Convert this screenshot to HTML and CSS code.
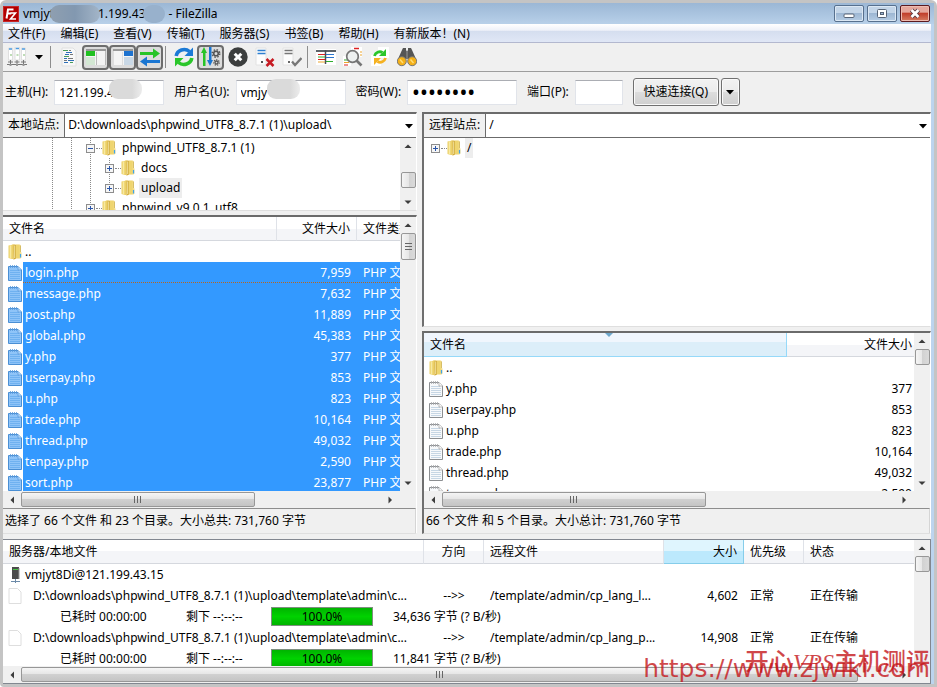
FILE: index.html
```html
<!DOCTYPE html>
<html lang="zh-CN">
<head>
<meta charset="utf-8">
<title>FileZilla</title>
<link rel="stylesheet" href="styles.css">
</head>
<body>
<svg class="sprite" aria-hidden="true">
  <symbol id="folder" viewBox="0 0 14 16">
    <path d="M4 .5h7.500l1 .5v7l1 .5v5l-1 1H6z" fill="#f3dc86"/>
    <path d="M8 .8h3.500v13.400H8z" fill="#efd56f"/>
    <path d="M.5 1.500L5.500.5v14.500L4 15 .5 14z" fill="#ecd067"/>
    <path d="M2.500 1.300v13" stroke="#f7e9a3" stroke-width="1.600"/>
    <path d="M5.500.5L8 1v13.500L5.500 15.800z" fill="#d3ac3c"/>
    <path d="M6.700 1.500v12.500" stroke="#f9efb8" stroke-width=".8"/>
    <path d="M12.500 10v3.500" stroke="#3fa4ea" stroke-width="1.200"/>
    <path d="M12.500 1.500V8" stroke="#c9a93f" stroke-width=".7"/>
  </symbol>
  <symbol id="note" viewBox="0 0 14 16">
    <path d="M.5 1.500h9.500l3.500 3.500v10.500H.5z" fill="#f7f9fb" stroke="#8c8f92"/>
    <path d="M2 5.500h9M2 7.500h10M2 9.500h10M2 11.500h10M2 13.500h10" stroke="#c6d6e4"/>
    <path d="M2.500 0v3M4.500 0v3M6.500 0v3M8.500 0v3" stroke="#a9abad" stroke-width=".8"/>
    <path d="M10 1.500v3.500h3.500" fill="#fff" stroke="#aaa" stroke-width=".8"/>
  </symbol>
  <symbol id="note-sel" viewBox="0 0 14 16">
    <path d="M.5 1.500h9.500l3.500 3.500v10.500H.5z" fill="#8fc4f8" stroke="#4a8fd4"/>
    <path d="M2 5.500h9M2 7.500h10M2 9.500h10M2 11.500h10M2 13.500h10" stroke="#6fb1f0"/>
    <path d="M2.500 0v3M4.500 0v3M6.500 0v3M8.500 0v3" stroke="#5b9bdc" stroke-width=".8"/>
    <path d="M10 1.500v3.500h3.500" fill="#b5d9fb" stroke="#5b9bdc" stroke-width=".8"/>
  </symbol>
  <symbol id="blank" viewBox="0 0 14 16"><path d="M1 .5h8.500l3.500 3.500v11.500H1z" fill="#fff" stroke="#dedede"/></symbol>
  <symbol id="plus" viewBox="0 0 9 9"><rect x=".5" y=".5" width="8" height="8" fill="#f6f6f6" stroke="#8d8d8d"/><path d="M2 4.500h5M4.500 2v5" stroke="#2a55a8"/></symbol>
  <symbol id="minus" viewBox="0 0 9 9"><rect x=".5" y=".5" width="8" height="8" fill="#f6f6f6" stroke="#8d8d8d"/><path d="M2 4.500h5" stroke="#2a55a8"/></symbol>
  <symbol id="up" viewBox="0 0 8 8"><path d="M.5 6L4 2.500 7.500 6z" fill="#3c3c3c"/></symbol>
  <symbol id="down" viewBox="0 0 8 8"><path d="M.5 2.500h7L4 6z" fill="#3c3c3c"/></symbol>
  <symbol id="left" viewBox="0 0 8 8"><path d="M6 .5v7L2.500 4z" fill="#3c3c3c"/></symbol>
  <symbol id="right" viewBox="0 0 8 8"><path d="M2.500.5v7L6 4z" fill="#3c3c3c"/></symbol>
  <symbol id="drop" viewBox="0 0 8 8"><path d="M0 2h8L4 6.500z" fill="#000"/></symbol>
</svg>

<div class="window">
  <header class="titlebar">
    <svg class="logo" viewBox="0 0 16 16" aria-hidden="true"><rect width="16" height="16" fill="#b30000"/><rect x=".5" y=".5" width="15" height="15" fill="none" stroke="#d85050" stroke-dasharray="1 1"/><path d="M3.500 12.500L5 3.500h5.500M4.300 7.500h4" fill="none" stroke="#fff" stroke-width="2"/><path d="M7.500 7h5l-5 6h5.500" fill="none" stroke="#fff" stroke-width="1.600"/></svg>
    <h1 class="title">vmjyt<span class="blot blot-wide"></span>1.199.43<span class="blot blot-small"></span>- FileZilla</h1>
    <div class="win-buttons">
      <button class="win" aria-label="最小化"><svg viewBox="0 0 28 15"><rect x="9" y="8" width="10" height="3.500" rx="1" fill="#fff" stroke="#566375"/></svg></button>
      <button class="win" aria-label="最大化"><svg viewBox="0 0 28 15"><rect x="9.500" y="3.500" width="9" height="8" rx="1" fill="#fff" stroke="#566375"/><rect x="12.500" y="6.500" width="3" height="2" fill="#9db8d6" stroke="#566375"/></svg></button>
      <button class="win close" aria-label="关闭"><svg viewBox="0 0 28 15"><path d="M10.500 4l7 7M17.500 4l-7 7" stroke="#5b3a44" stroke-width="4.500"/><path d="M10.500 4l7 7M17.500 4l-7 7" stroke="#fff" stroke-width="2.600"/></svg></button>
    </div>
  </header>

  <nav class="menubar">
    <button>文件(F)</button><button>编辑(E)</button><button>查看(V)</button><button>传输(T)</button><button>服务器(S)</button><button>书签(B)</button><button>帮助(H)</button><button>有新版本！(N)</button>
  </nav>

  <div class="toolbar" role="toolbar">
    <button class="tool" aria-label="站点管理器"><svg viewBox="0 0 20 20"><path d="M1.500 1h4v12h-4zM8 0h4.500v13H8zM14.500 1h4v12h-4z" fill="#fff" stroke="#d8d8d8" stroke-width=".8"/><path d="M2 2h3M8.700 1.500H12M15 2h3" stroke="#4c9be0" stroke-width="1.600"/><path d="M3 8h2M9.500 8h2M16 8h2" stroke="#7ebb6e" stroke-width="1"/><path d="M0 17.500h20M3.500 13v4M10 13v4M16.500 13v4M1 15h5M7.500 15h5M14 15h5" stroke="#777"/><path d="M2.500 18h2M9 18h2M15.500 18h2" stroke="#999" stroke-width="2"/></svg></button>
    <button class="tool arrow" aria-label="站点列表"><svg class="tiny"><use href="#drop"/></svg></button>
    <span class="sep"></span>
    <button class="tool" aria-label="消息日志"><svg viewBox="0 0 20 20"><path d="M3 1h11l3 3v15H3z" fill="#f8f8f8" stroke="#e0e0e0"/><path d="M4 3.500h5M5 9.500h5M11 15.500h3" stroke="#4a9c5b" stroke-width="1.200"/><path d="M7 5.500h6M5 11.500h3M6 7.500h4M9 13.500h6M5 15.500h4" stroke="#2e6fb8" stroke-width="1.200"/><path d="M11 7.500h3M9 11.500h5M5 13.500h3M10 3.500h2" stroke="#777" stroke-width="1.200"/></svg></button>
    <button class="tool on" aria-label="本地目录树"><svg viewBox="0 0 20 20"><path d="M0 2h20v16H0z" fill="#f4f4f4"/><path d="M0 2h20v2H0z" fill="#999"/><path d="M0 4h9v5H0z" fill="#1fc01f"/><path d="M0 10h9v8H0z" fill="#d3e7d3"/><path d="M10.500 5v13M19.500 4v14" stroke="#bbb"/></svg></button>
    <button class="tool on" aria-label="远程目录树"><svg viewBox="0 0 20 20"><path d="M0 2h20v16H0z" fill="#f4f4f4"/><path d="M0 2h20v2H0z" fill="#999"/><path d="M11 4h9v5h-9z" fill="#1d72cf"/><path d="M11 10h9v8h-9z" fill="#c9d8e6"/><path d="M9.500 5v13M.5 4v14" stroke="#ddd"/></svg></button>
    <button class="tool on" aria-label="传输队列"><svg viewBox="0 0 20 20"><path d="M0 5h13V1.500L20 6.500 13 11.500V8H0z" fill="#27c427"/><path d="M20 13H7V9.500L0 14.500 7 19.500V16h13z" fill="#1a76d2"/></svg></button>
    <span class="sep"></span>
    <button class="tool" aria-label="刷新"><svg viewBox="0 0 20 20"><path d="M2.200 9A8 7.500 0 0 1 15.500 4.500" fill="none" stroke="#1c7ad6" stroke-width="3.600"/><path d="M19 .5V9h-8.500z" fill="#1c7ad6"/><path d="M17.800 11A8 7.500 0 0 1 4.500 15.500" fill="none" stroke="#2ac62a" stroke-width="3.600"/><path d="M1 19.500V11h8.500z" fill="#2ac62a"/></svg></button>
    <button class="tool on" aria-label="处理队列"><svg viewBox="0 0 20 20"><path d="M2 19V6H0L3 0l3 6H4.500v13z" fill="#27c427"/><path d="M8 0h2.500v13H12l-3 6-3-6h2z" fill="#1a76d2"/><circle cx="15" cy="6.500" r="2.300" fill="none" stroke="#555" stroke-width="1.600"/><circle cx="15" cy="6.500" r="3.800" fill="none" stroke="#555" stroke-width="1.400" stroke-dasharray="1.500 1.500"/><circle cx="15.500" cy="15.500" r="1.500" fill="none" stroke="#555" stroke-width="1.300"/><circle cx="15.500" cy="15.500" r="2.700" fill="none" stroke="#555" stroke-width="1.200" stroke-dasharray="1.200 1.200"/></svg></button>
    <button class="tool" aria-label="取消"><svg viewBox="0 0 20 20"><circle cx="10" cy="10" r="9.700" fill="#3c3e3e"/><path d="M6.700 6.700l6.600 6.600M13.300 6.700l-6.600 6.600" stroke="#fff" stroke-width="3"/></svg></button>
    <button class="tool" aria-label="断开连接"><svg viewBox="0 0 20 20"><path d="M1 1h10v17H1z" fill="#fdfdfd" stroke="#e2e2e2"/><path d="M2.500 3.500h8M2.500 6.500h8" stroke="#2d7fd0" stroke-width="1.300"/><path d="M6 15h2" stroke="#555" stroke-width="2"/><path d="M11.500 12l7 7M18.500 12l-7 7" stroke="#c61a22" stroke-width="2.500"/></svg></button>
    <button class="tool" aria-label="重新连接"><svg viewBox="0 0 20 20"><path d="M1 1h10v17H1z" fill="#fdfdfd" stroke="#e2e2e2"/><path d="M2.500 3.500h8M2.500 6.500h8" stroke="#777" stroke-width="1.300"/><path d="M6 15h2" stroke="#666" stroke-width="2"/><path d="M10 14.500l3 3.500 6.500-7" fill="none" stroke="#777" stroke-width="2.300"/></svg></button>
    <span class="sep"></span>
    <button class="tool" aria-label="过滤器"><svg viewBox="0 0 20 20"><path d="M0 2h20v16H0z" fill="#fff"/><path d="M0 4h20" stroke="#5d6368" stroke-width="2"/><path d="M9.500 3v14" stroke="#4a4f54" stroke-width="1.500"/><path d="M2 7.500h7" stroke="#d22"/><path d="M10 7.500h8M10 10.500h8" stroke="#2a74cc"/><path d="M2 10h7M10 14.500h7" stroke="#2eae2e"/><path d="M2 12.500h7" stroke="#d22"/><path d="M2 15h7" stroke="#eca52c"/></svg></button>
    <button class="tool" aria-label="目录比较"><svg viewBox="0 0 20 20"><path d="M8 0h11v10H8zM0 9h8v10H0z" fill="#fff"/><path d="M11 1.500h5" stroke="#d22" stroke-width="1.500"/><path d="M17 5h2M17 8h2" stroke="#eca52c"/><path d="M1 13h4" stroke="#2eae2e"/><path d="M1 15.500h5" stroke="#eca52c"/><path d="M1 18h4" stroke="#d22"/><circle cx="9.500" cy="9.500" r="5.800" fill="#edf0f0" stroke="#757575" stroke-width="1.700"/><path d="M13.500 13.500l5 5" stroke="#757575" stroke-width="2.700"/></svg></button>
    <button class="tool" aria-label="同步浏览"><svg viewBox="0 0 20 20"><path d="M8 0h11v11H8zM1 8h10v11H1z" fill="#fff"/><path d="M4.500 9a5.500 5.500 0 0 1 8-3.500" fill="none" stroke="#2ac62a" stroke-width="2.800"/><path d="M16 2v7H9z" fill="#2ac62a"/><path d="M15.500 11a5.500 5.500 0 0 1-8 3.500" fill="none" stroke="#f5b120" stroke-width="2.800"/><path d="M4 18v-7h7z" fill="#f5b120"/></svg></button>
    <button class="tool" aria-label="搜索"><svg viewBox="0 0 20 20"><path d="M1 12L5 3l1-2h3v3h2V1h3l1 2 4 9-5 3-3-3H9l-3 3z" fill="#555"/><path d="M10 3v9" stroke="#999"/><circle cx="4.800" cy="14.200" r="4.500" fill="#f4b018" stroke="#777"/><circle cx="15.200" cy="14.200" r="4.500" fill="#f4b018" stroke="#777"/><path d="M3 12.500l3 3.500M13.500 12.500l3 3.500" stroke="#ffdc74" stroke-width="1.500"/></svg></button>
  </div>

  <form class="quick">
    <label for="host">主机(H):</label>
    <span class="field host"><input id="host" value="121.199.4"><i class="blot over"></i></span>
    <label for="user">用户名(U):</label>
    <span class="field user"><input id="user" value="vmjy"><i class="blot over"></i></span>
    <label for="pass">密码(W):</label>
    <span class="field pass"><input id="pass" type="password" value="password"></span>
    <label for="port">端口(P):</label>
    <span class="field port"><input id="port"></span>
    <button type="button" class="push connect">快速连接(Q)</button>
    <button type="button" class="push more" aria-label="历史"><svg class="tiny"><use href="#drop"/></svg></button>
  </form>

  <main class="sites">
    <section class="site local">
      <div class="pane top">
        <div class="path"><label for="lpath">本地站点:</label><div class="combo"><select id="lpath"><option>D:\downloads\phpwind_UTF8_8.7.1 (1)\upload\</option></select><svg class="tiny"><use href="#drop"/></svg></div></div>
        <div class="scroll">
          <ul class="tree deep">
            <li><i class="g"></i><i class="g"></i><i class="x g"><svg><use href="#minus"/></svg></i><svg class="ico"><use href="#folder"/></svg><span>phpwind_UTF8_8.7.1 (1)</span></li>
            <li><i class="g"></i><i class="g"></i><i class="g"></i><i class="x g"><svg><use href="#plus"/></svg></i><svg class="ico"><use href="#folder"/></svg><span>docs</span></li>
            <li><i class="g"></i><i class="g"></i><i class="g"></i><i class="x g half"><svg><use href="#plus"/></svg></i><svg class="ico"><use href="#folder"/></svg><span class="cur">upload</span></li>
            <li><i class="g"></i><i class="g"></i><i class="x g"><svg><use href="#plus"/></svg></i><svg class="ico"><use href="#folder"/></svg><span>phpwind_v9.0.1_utf8</span></li>
          </ul>
          <div class="vbar low"><svg><use href="#up"/></svg><b></b><svg class="end"><use href="#down"/></svg></div>
        </div>
      </div>
      <div class="pane bottom">
        <div class="scroll both">
          <div class="view">
          <table class="files">
            <colgroup><col class="c-name"><col class="c-size"><col></colgroup>
            <thead><tr><th>文件名</th><th class="num">文件大小</th><th>文件类型</th></tr></thead>
            <tbody>
              <tr><td><svg class="ico"><use href="#folder"/></svg><span class="nm">..</span></td><td></td><td></td></tr>
              <tr class="sel focus"><td><svg class="ico"><use href="#note-sel"/></svg><span class="nm">login.php</span></td><td class="num">7,959</td><td>PHP 文件</td></tr>
              <tr class="sel"><td><svg class="ico"><use href="#note-sel"/></svg><span class="nm">message.php</span></td><td class="num">7,632</td><td>PHP 文件</td></tr>
              <tr class="sel"><td><svg class="ico"><use href="#note-sel"/></svg><span class="nm">post.php</span></td><td class="num">11,889</td><td>PHP 文件</td></tr>
              <tr class="sel"><td><svg class="ico"><use href="#note-sel"/></svg><span class="nm">global.php</span></td><td class="num">45,383</td><td>PHP 文件</td></tr>
              <tr class="sel"><td><svg class="ico"><use href="#note-sel"/></svg><span class="nm">y.php</span></td><td class="num">377</td><td>PHP 文件</td></tr>
              <tr class="sel"><td><svg class="ico"><use href="#note-sel"/></svg><span class="nm">userpay.php</span></td><td class="num">853</td><td>PHP 文件</td></tr>
              <tr class="sel"><td><svg class="ico"><use href="#note-sel"/></svg><span class="nm">u.php</span></td><td class="num">823</td><td>PHP 文件</td></tr>
              <tr class="sel"><td><svg class="ico"><use href="#note-sel"/></svg><span class="nm">trade.php</span></td><td class="num">10,164</td><td>PHP 文件</td></tr>
              <tr class="sel"><td><svg class="ico"><use href="#note-sel"/></svg><span class="nm">thread.php</span></td><td class="num">49,032</td><td>PHP 文件</td></tr>
              <tr class="sel"><td><svg class="ico"><use href="#note-sel"/></svg><span class="nm">tenpay.php</span></td><td class="num">2,590</td><td>PHP 文件</td></tr>
              <tr class="sel"><td><svg class="ico"><use href="#note-sel"/></svg><span class="nm">sort.php</span></td><td class="num">23,877</td><td>PHP 文件</td></tr>
            </tbody>
          </table>
          </div>
          <div class="vbar tall"><svg><use href="#up"/></svg><b></b><svg class="end"><use href="#down"/></svg></div>
          <div class="hbar"><svg><use href="#left"/></svg><b></b><svg class="end"><use href="#right"/></svg></div>
        </div>
        <div class="status">选择了 66 个文件 和 23 个目录。大小总共: 731,760 字节</div>
      </div>
    </section>

    <section class="site remote">
      <div class="pane top">
        <div class="path"><label for="rpath">远程站点:</label><div class="combo"><select id="rpath"><option>/</option></select><svg class="tiny"><use href="#drop"/></svg></div></div>
        <div class="scroll">
          <ul class="tree">
            <li><i class="x"><svg><use href="#plus"/></svg></i><svg class="ico"><use href="#folder"/></svg><span class="cur">/</span></li>
          </ul>
        </div>
      </div>
      <div class="pane bottom">
        <div class="scroll both">
          <div class="view">
          <table class="files">
            <colgroup><col class="c-name"><col></colgroup>
            <thead><tr><th class="sorted">文件名<svg class="mark" viewBox="0 0 8 4"><path d="M0 0h8L4 4z" fill="#6fa8cc"/></svg></th><th class="num">文件大小</th></tr></thead>
            <tbody>
              <tr><td><svg class="ico"><use href="#folder"/></svg><span class="nm">..</span></td><td></td></tr>
              <tr><td><svg class="ico"><use href="#note"/></svg><span class="nm">y.php</span></td><td class="num">377</td></tr>
              <tr><td><svg class="ico"><use href="#note"/></svg><span class="nm">userpay.php</span></td><td class="num">853</td></tr>
              <tr><td><svg class="ico"><use href="#note"/></svg><span class="nm">u.php</span></td><td class="num">823</td></tr>
              <tr><td><svg class="ico"><use href="#note"/></svg><span class="nm">trade.php</span></td><td class="num">10,164</td></tr>
              <tr><td><svg class="ico"><use href="#note"/></svg><span class="nm">thread.php</span></td><td class="num">49,032</td></tr>
              <tr><td><svg class="ico"><use href="#note"/></svg><span class="nm">tenpay.php</span></td><td class="num">2,590</td></tr>
            </tbody>
          </table>
          </div>
          <div class="vbar"><svg><use href="#up"/></svg><b></b><svg class="end"><use href="#down"/></svg></div>
          <div class="hbar"><svg><use href="#left"/></svg><b></b><svg class="end"><use href="#right"/></svg></div>
        </div>
        <div class="status">66 个文件 和 5 个目录。大小总计: 731,760 字节</div>
      </div>
    </section>
  </main>

  <section class="queue">
    <div class="scroll both">
      <div class="view">
      <table>
        <colgroup><col><col class="q-dir"><col class="q-remote"><col class="q-size"><col class="q-prio"><col class="q-state"></colgroup>
        <thead><tr><th>服务器/本地文件</th><th class="mid">方向</th><th>远程文件</th><th class="num hot">大小</th><th>优先级</th><th>状态</th></tr></thead>
        <tbody>
          <tr><td colspan="6"><svg class="ico" viewBox="0 0 14 16"><path d="M4 0h7v12H4z" fill="#4b4b4b"/><path d="M5 2.500h5" stroke="#47c447"/><path d="M11 1v11" stroke="#999"/><path d="M7.500 12v4M3 14.500h9" stroke="#6c8aa8"/></svg><span class="nm">vmjyt8Di@121.199.43.15</span></td></tr>
          <tr><td><svg class="ico"><use href="#blank"/></svg><span class="lp">D:\downloads\phpwind_UTF8_8.7.1 (1)\upload\template\admin\c...</span></td><td class="mid">--&gt;&gt;</td><td>/template/admin/cp_lang_l...</td><td class="num">4,602</td><td>正常</td><td>正在传输</td></tr>
          <tr><td colspan="6"><div class="prog"><span>已耗时 00:00:00</span><span>剩下 --:--:--</span><span class="bar" role="progressbar" aria-valuenow="100">100.0%</span><span>34,636 字节 (? B/秒)</span></div></td></tr>
          <tr><td><svg class="ico"><use href="#blank"/></svg><span class="lp">D:\downloads\phpwind_UTF8_8.7.1 (1)\upload\template\admin\c...</span></td><td class="mid">--&gt;&gt;</td><td>/template/admin/cp_lang_p...</td><td class="num">14,908</td><td>正常</td><td>正在传输</td></tr>
          <tr><td colspan="6"><div class="prog"><span>已耗时 00:00:00</span><span>剩下 --:--:--</span><span class="bar" role="progressbar" aria-valuenow="100">100.0%</span><span>11,841 字节 (? B/秒)</span></div></td></tr>
        </tbody>
      </table>
      </div>
      <div class="vbar"><svg><use href="#up"/></svg><b></b></div>
      <div class="hbar"><svg><use href="#left"/></svg><b></b><svg class="end"><use href="#right"/></svg></div>
    </div>
  </section>

  <div class="mark-cn">开心<em>VPS</em>主机测评</div>
  <div class="mark-url">https://www.zjwiki.com</div>
</div>
</body>
</html>
```
FILE: styles.css
```css
* { box-sizing: border-box; }
body, h1, ul { margin: 0; padding: 0; }
body {
  background: #fff;
  color: #000;
  font-family: "Noto Sans", "Noto Sans CJK SC", sans-serif;
  font-size: 12px;
  line-height: 20px;
}
button, input, select { font: inherit; color: inherit; margin: 0; padding: 0; border: 0; border-radius: 0; }
button { background: none; }
i { font-style: normal; }
.sprite { position: absolute; width: 0; height: 0; }
.tiny { width: 8px; height: 8px; display: block; }
.ico { width: 14px; height: 16px; flex: none; }

.window {
  position: relative;
  display: grid;
  grid-template-rows: 21px 19px 29px 40px minmax(0, 1fr) 145px;
  height: 100vh;
  border: 3px solid #c4c4c4;
  border-radius: 6px 6px 0 4px;
  background: #f0f0f0;
  box-shadow: inset -3px 0 #bcd4ee;
}

/* Title bar */
.titlebar {
  display: flex;
  align-items: center;
  background: linear-gradient(#9bb7d5, #b8d0e9);
}
.logo { width: 16px; height: 16px; }
.title {
  display: flex;
  align-items: center;
  flex: 1;
  margin-left: 4px;
  font-size: 12px;
  font-weight: 400;
}
.blot { display: block; height: 18px; border-radius: 9px; }
.blot-wide { width: 50px; margin: 0 -2px 0 -4px; background: linear-gradient(90deg, #8f9fb0, #8298b0 50%, #a3b5c8); }
.blot-small { width: 22px; margin: 0 4px 0 -3px; background: #98b1cc; }
.win-buttons { display: flex; gap: 3px; margin-right: 4px; }
.win {
  width: 30px;
  height: 17px;
  border: 1px solid #57708e;
  border-radius: 2px;
  background: linear-gradient(#c3d5e8 45%, #9db7d3 50%, #b5cce4);
  box-shadow: inset 0 0 0 1px #dce8f4;
}
.win svg { display: block; width: 28px; height: 15px; }
.close {
  border-color: #5b1a20;
  background: linear-gradient(#e5a79c 40%, #c2402c 50%, #d67d62);
  box-shadow: inset 0 0 0 1px #eebbb0;
}

/* Menu */
.menubar {
  display: flex;
  gap: 15px;
  padding-left: 5px;
  margin-right: 3px;
  background: linear-gradient(#fff, #eef1f9 35%, #d5deef 40%, #e0e7f6);
  border-bottom: 1px solid #b3b8cf;
}
.menubar button { line-height: 20px; white-space: nowrap; }

/* Toolbar */
.toolbar {
  display: flex;
  align-items: center;
  margin-right: 3px;
  border-bottom: 1px solid #9d9d9d;
}
.tool { display: grid; place-items: center; width: 27px; height: 25px; flex: none; }
.tool svg { width: 20px; height: 20px; }
.tool .tiny { width: 8px; height: 8px; }
.tool.arrow { width: 18px; }
.tool.on {
  border: 2px solid #6d6d6d;
  border-radius: 4px;
  background: #dcdcdc;
}
.sep { width: 1px; height: 22px; margin: 0 4px 0 2px; background: #8d8d8d; }

/* Quick connect */
.quick { display: flex; align-items: center; padding: 0 3px 0 2px; }
.quick label { white-space: nowrap; margin-right: 6px; }
.field { position: relative; height: 25px; margin-right: 10px; }
.field input {
  width: 100%;
  height: 100%;
  padding: 0 4px;
  background: #fff;
  border: 1px solid #e1e4ea;
  border-top-color: #abadb3;
}
.host, .user, .pass { width: 110px; }
.pass input { font-size: 21px; }
.port { width: 48px; }
.over { position: absolute; left: 55px; top: -1px; width: 33px; height: 20px; background: linear-gradient(90deg, #dadada 70%, #ececec); }
.user .over { left: 31px; }
.push {
  height: 28px;
  border: 1px solid #707070;
  border-radius: 3px;
  background: linear-gradient(#f2f2f2, #ebebeb 50%, #dddddd 50%, #cfcfcf);
  box-shadow: inset 0 0 0 1px #fafafa;
}
.connect { width: 86px; margin-right: 2px; }
.more { width: 19px; display: grid; place-items: center; }

/* Local / remote sites */
.sites {
  display: grid;
  grid-template-columns: minmax(0, 414fr) minmax(0, 509fr);
  gap: 5px;
  margin-right: 3px;
  padding-bottom: 5px;
}
.site { display: grid; gap: 4px; min-height: 0; }
.local { grid-template-rows: minmax(0, 99fr) minmax(0, 317fr); }
.remote { grid-template-rows: minmax(0, 214fr) minmax(0, 202fr); }
.pane {
  display: flex;
  flex-direction: column;
  min-height: 0;
  border-top: 2px solid #6b6b6b;
  border-right: 1px solid #fff;
  border-bottom: 1px solid #dfdfdf;
}
.remote .pane { border-left: 2px solid #6f6f6f; }
.path { display: flex; flex: none; height: 24px; border-bottom: 1px solid #6b6b6b; background: #fff; }
.path label { padding: 0 5px; line-height: 22px; background: #f0f0f0; border-right: 1px solid #6b6b6b; white-space: nowrap; }
.combo { position: relative; flex: 1; }
.combo select { appearance: none; display: block; width: 100%; height: 22px; padding-left: 3px; background: #fff; }
.combo .tiny { position: absolute; right: 3px; top: 8px; pointer-events: none; }

.scroll { display: grid; grid-template-columns: minmax(0, 1fr) auto; flex: 1; min-height: 0; background: #fff; }
.both { grid-template-rows: minmax(0, 1fr) 17px; }
.view { overflow: hidden; }

.tree { list-style: none; overflow: hidden; padding-left: 2px; }
.deep { padding-left: 40px; }
.tree li { display: flex; align-items: center; height: 20px; }
.tree li span { padding: 0 2px; margin-left: 4px; white-space: nowrap; }
.tree .cur { background: #ededed; }
.tree i { display: grid; place-items: center; width: 19px; height: 20px; flex: none; }
.g { background: repeating-linear-gradient(#8a8a8a 0 1px, transparent 1px 2px) 9px 0 / 1px 100% no-repeat; }
.g.half { background-size: 1px 10px; }
.tree i svg { width: 9px; height: 9px; }
.tree .ico { margin-left: 2px; }
.tree .x { position: relative; }
.tree .x::after { content: ""; position: absolute; left: 15px; top: 10px; width: 6px; border-top: 1px dotted #8a8a8a; }

/* Scroll bars */
.vbar, .hbar { display: flex; align-items: center; background: #f0f0f0; }
.vbar { flex-direction: column; width: 16px; }
.hbar { grid-column: 1 / -1; padding-right: 17px; }
.vbar svg, .hbar svg { width: 8px; height: 8px; margin: 5px; flex: none; }
.vbar svg { margin: 4px; }
.vbar .end { margin-top: auto; }
.hbar .end { margin-left: auto; }
.vbar b, .hbar b { display: grid; place-items: center; border: 1px solid #979797; border-radius: 2px; flex: none; }
.vbar b { width: 15px; height: 16px; background: linear-gradient(90deg, #f5f5f5, #e6e6e6 50%, #d2d2d2 50%, #dadada); }
.hbar b { width: 59%; height: 15px; background: linear-gradient(#f5f5f5, #e6e6e6 45%, #d0d0d0 50%, #c4c4c4); }
.vbar.low b { margin-top: 18px; }
.vbar.tall b { height: 27px; }
.vbar.tall b::after { content: ""; width: 7px; height: 8px; background: repeating-linear-gradient(#666 0 1px, transparent 1px 3px); }
.hbar b::after { content: ""; width: 8px; height: 7px; background: repeating-linear-gradient(90deg, #666 0 1px, transparent 1px 3px); }
.remote .hbar b { width: 54%; }
.queue .hbar b { width: 92%; }

/* Lists */
table { width: 100%; table-layout: fixed; border-collapse: separate; border-spacing: 0; }
th {
  position: relative;
  height: 24px;
  padding: 1px 6px 0;
  text-align: left;
  font-weight: 400;
  white-space: nowrap;
  overflow: hidden;
  background: linear-gradient(#fff 50%, #f4f5f8 50%, #f4f5f8);
  border-bottom: 1px solid #d5d8de;
  border-right: 1px solid #dfe2e8;
}
th:last-child { border-right: 0; }
td { height: 21px; padding: 0 6px; line-height: 18px; white-space: nowrap; overflow: hidden; }
td .ico { display: inline-block; vertical-align: middle; }
td:first-child { padding-left: 5px; }
.num { text-align: right; }
.mid { text-align: center; }
.nm { display: inline-block; padding-left: 3px; vertical-align: middle; }
.local .c-name { width: 274px; }
.local .c-size { width: 80px; }
.remote .c-name { width: 74%; }
.remote .num { padding-right: 2px; }
.sel td { background: #39f; color: #fff; }
.sel td:first-child { background: linear-gradient(90deg, #fff 20px, #39f 20px); }
.focus td { background: repeating-linear-gradient(90deg, #b8641e 0 1px, #39f 1px 2px) 0 100% / 100% 1px no-repeat #39f; }
.focus td:first-child { background: linear-gradient(#fff, #fff) 0 0 / 20px 100% no-repeat, repeating-linear-gradient(90deg, #b8641e 0 1px, #39f 1px 2px) 0 100% / 100% 1px no-repeat #39f; }
.sorted {
  background: linear-gradient(#f0f6fd 40%, #dceef9 40%);
  border-color: #96d9f9;
}
.mark { position: absolute; left: 50%; top: 0; width: 8px; height: 4px; }
.status { flex: none; height: 25px; padding-left: 2px; line-height: 24px; border-top: 1px solid #8d8d8d; border-right: 1px solid #d5d5d5; white-space: nowrap; }

/* Queue */
.queue {
  display: grid;
  min-height: 0;
  margin-right: 3px;
  border: solid #828790;
  border-width: 1px 1px 1px 0;
}
.q-dir { width: 60px; }
.q-remote { width: 180px; }
.q-size { width: 80px; }
.q-prio { width: 60px; }
.q-state { width: 110px; }
.hot { background: linear-gradient(#dff5fe 50%, #bce9fd 50%); border-color: #86cdea; }
.lp { display: inline-block; padding-left: 11px; vertical-align: middle; }
.prog { display: grid; grid-template-columns: 126px 85px 102px auto; padding-left: 52px; align-items: center; }
.bar { height: 19px; line-height: 18px; text-align: center; border: 1px solid #7f8f7f; background: linear-gradient(#00b400, #00d200 50%, #00b400); }
.prog .bar + span { padding-left: 20px; }

/* Watermark */
.mark-cn, .mark-url { position: absolute; right: 4px; color: rgba(196, 20, 24, .78); white-space: nowrap; pointer-events: none; }
.mark-cn { bottom: 8px; font: 500 24px/28px "Noto Sans CJK SC", sans-serif; }
.mark-cn em { font-family: "Liberation Serif", serif; }
.mark-url { bottom: 0; font: 25px/30px "DejaVu Sans", sans-serif; }
```
